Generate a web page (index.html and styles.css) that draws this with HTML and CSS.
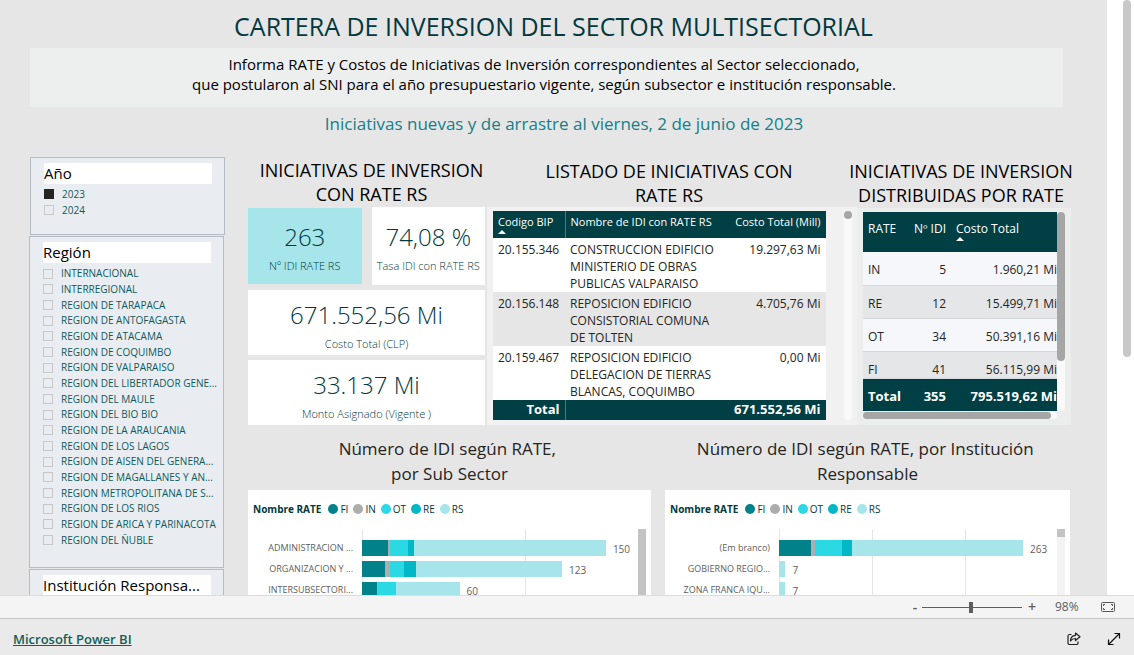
FILE: index.html
```html
<!DOCTYPE html>
<html lang="es">
<head>
<meta charset="utf-8">
<meta name="viewport" content="width=device-width, initial-scale=1">
<title>Cartera de inversión</title>
<link rel="stylesheet" href="styles.css">
</head>
<body>
<div class="app">
  <div class="viewport">
    <div class="report">
      <header class="intro">
        <h1 class="title">CARTERA DE INVERSION DEL SECTOR MULTISECTORIAL</h1>
        <p class="summary">Informa RATE y Costos de Iniciativas de Inversión correspondientes al Sector seleccionado,<br>que postularon al SNI para el año presupuestario vigente, según subsector e institución responsable.</p>
        <p class="date">Iniciativas nuevas y de arrastre al viernes, 2 de junio de 2023</p>
      </header>
      <div class="body">
        <aside class="filters">
          <section class="slicer slicer-year">
            <h2 class="slicer-title">Año</h2>
            <div class="options">
              <label class="option"><input type="checkbox" checked>2023</label>
              <label class="option"><input type="checkbox">2024</label>
            </div>
          </section>
          <section class="slicer slicer-region">
            <h2 class="slicer-title">Región</h2>
            <div class="options options-region">
              <label class="option"><input type="checkbox">INTERNACIONAL</label>
              <label class="option"><input type="checkbox">INTERREGIONAL</label>
              <label class="option"><input type="checkbox">REGION DE TARAPACA</label>
              <label class="option"><input type="checkbox">REGION DE ANTOFAGASTA</label>
              <label class="option"><input type="checkbox">REGION DE ATACAMA</label>
              <label class="option"><input type="checkbox">REGION DE COQUIMBO</label>
              <label class="option"><input type="checkbox">REGION DE VALPARAISO</label>
              <label class="option"><input type="checkbox">REGION DEL LIBERTADOR GENE...</label>
              <label class="option"><input type="checkbox">REGION DEL MAULE</label>
              <label class="option"><input type="checkbox">REGION DEL BIO BIO</label>
              <label class="option"><input type="checkbox">REGION DE LA ARAUCANIA</label>
              <label class="option"><input type="checkbox">REGION DE LOS LAGOS</label>
              <label class="option"><input type="checkbox">REGION DE AISEN DEL GENERA...</label>
              <label class="option"><input type="checkbox">REGION DE MAGALLANES Y AN...</label>
              <label class="option"><input type="checkbox">REGION METROPOLITANA DE S...</label>
              <label class="option"><input type="checkbox">REGION DE LOS RIOS</label>
              <label class="option"><input type="checkbox">REGION DE ARICA Y PARINACOTA</label>
              <label class="option"><input type="checkbox">REGION DEL ÑUBLE</label>
            </div>
          </section>
          <section class="slicer slicer-inst">
            <h2 class="slicer-title">Institución Responsa...</h2>
          </section>
        </aside>
        <main class="main">
          <div class="top">
            <section class="col-kpi">
              <h2 class="heading heading-kpi">INICIATIVAS DE INVERSION<br>CON RATE RS</h2>
              <div class="cards">
                <div class="card card-accent"><strong class="num">263</strong><span class="cap">Nº IDI RATE RS</span></div>
                <div class="card card-rate"><strong class="num">74,08 %</strong><span class="cap">Tasa IDI con RATE RS</span></div>
                <div class="card card-wide"><strong class="num">671.552,56 Mi</strong><span class="cap">Costo Total (CLP)</span></div>
                <div class="card card-wide"><strong class="num">33.137 Mi</strong><span class="cap">Monto Asignado (Vigente )</span></div>
              </div>
            </section>
            <section class="col-list">
              <h2 class="heading">LISTADO DE INICIATIVAS CON<br>RATE RS</h2>
              <div class="panel-list">
                <table class="list">
                  <colgroup><col class="c-code"><col><col class="c-cost"></colgroup>
                  <thead><tr><th>Codigo BIP<span class="sort"></span></th><th>Nombre de IDI con RATE RS</th><th class="right">Costo Total (Mill)</th></tr></thead>
                  <tbody>
                    <tr><td>20.155.346</td><td>CONSTRUCCION EDIFICIO<br>MINISTERIO DE OBRAS<br>PUBLICAS VALPARAISO</td><td class="right">19.297,63 Mi</td></tr>
                    <tr><td>20.156.148</td><td>REPOSICION EDIFICIO<br>CONSISTORIAL COMUNA<br>DE TOLTEN</td><td class="right">4.705,76 Mi</td></tr>
                    <tr><td>20.159.467</td><td>REPOSICION EDIFICIO<br>DELEGACION DE TIERRAS<br>BLANCAS, COQUIMBO</td><td class="right">0,00 Mi</td></tr>
                  </tbody>
                  <tfoot><tr><td class="right">Total</td><td></td><td class="right">671.552,56 Mi</td></tr></tfoot>
                </table>
                <div class="bar-v bar-list"><span class="thumb"></span></div>
              </div>
            </section>
            <section class="col-rate">
              <h2 class="heading heading-rate">INICIATIVAS DE INVERSION<br>DISTRIBUIDAS POR RATE</h2>
              <div class="panel-rate">
                <div class="rate-row">
                  <div class="rate-clip">
                    <table class="rate">
                      <colgroup><col class="c-rate"><col class="c-idi"><col></colgroup>
                      <thead><tr><th>RATE</th><th class="right">Nº IDI</th><th>Costo Total<span class="sort"></span></th></tr></thead>
                      <tbody>
                        <tr><td>IN</td><td class="right">5</td><td class="right">1.960,21 Mi</td></tr>
                        <tr><td>RE</td><td class="right">12</td><td class="right">15.499,71 Mi</td></tr>
                        <tr><td>OT</td><td class="right">34</td><td class="right">50.391,16 Mi</td></tr>
                        <tr class="cut"><td>FI</td><td class="right">41</td><td class="right">56.115,99 Mi</td></tr>
                      </tbody>
                      <tfoot><tr><td>Total</td><td class="right">355</td><td class="right">795.519,62 Mi</td></tr></tfoot>
                    </table>
                  </div>
                  <div class="bar-v bar-rate"><span class="thumb"></span></div>
                </div>
                <div class="bar-h"><span class="thumb"></span></div>
              </div>
            </section>
          </div>
          <div class="charts">
            <section class="chart-col">
              <h2 class="chart-heading">Número de IDI según RATE,&nbsp;<br>por Sub Sector</h2>
              <div class="chart chart-sub">
                <div class="legend"><b>Nombre RATE</b><span class="key fi">FI</span><span class="key in">IN</span><span class="key ot">OT</span><span class="key re">RE</span><span class="key rs">RS</span></div>
                <div class="plot-area">
                  <div class="cats"><span>ADMINISTRACION ...</span><span>ORGANIZACION Y ...</span><span>INTERSUBSECTORI...</span></div>
                  <div class="plot">
                    <div class="line"><i class="seg fi" style="--v:16"></i><i class="seg in" style="--v:1"></i><i class="seg ot" style="--v:11"></i><i class="seg re" style="--v:4"></i><i class="seg rs" style="--v:118"></i><span class="val">150</span></div>
                    <div class="line"><i class="seg fi" style="--v:14"></i><i class="seg in" style="--v:3"></i><i class="seg ot" style="--v:9"></i><i class="seg re" style="--v:7"></i><i class="seg rs" style="--v:90"></i><span class="val">123</span></div>
                    <div class="line"><i class="seg fi" style="--v:9"></i><i class="seg in" style="--v:1"></i><i class="seg ot" style="--v:11"></i><i class="seg rs" style="--v:39"></i><span class="val">60</span></div>
                  </div>
                  <div class="scroll"><span class="scroll-thumb"></span></div>
                </div>
              </div>
            </section>
            <section class="chart-col">
              <h2 class="chart-heading">Número de IDI según RATE, por Institución&nbsp;<br>Responsable</h2>
              <div class="chart chart-inst">
                <div class="legend"><b>Nombre RATE</b><span class="key fi">FI</span><span class="key in">IN</span><span class="key ot">OT</span><span class="key re">RE</span><span class="key rs">RS</span></div>
                <div class="plot-area">
                  <div class="cats"><span>(Em branco)</span><span>GOBIERNO REGIO...</span><span>ZONA FRANCA IQU...</span></div>
                  <div class="plot">
                    <div class="line"><i class="seg fi" style="--v:35"></i><i class="seg in" style="--v:4"></i><i class="seg ot" style="--v:29"></i><i class="seg re" style="--v:11"></i><i class="seg rs" style="--v:184"></i><span class="val">263</span></div>
                    <div class="line"><i class="seg rs" style="--v:7"></i><span class="val">7</span></div>
                    <div class="line"><i class="seg rs" style="--v:7"></i><span class="val">7</span></div>
                  </div>
                  <div class="scroll"><span class="scroll-thumb"></span></div>
                </div>
              </div>
            </section>
          </div>
        </main>
      </div>
    </div>
    <div class="gutter"><span class="page-thumb"></span></div>
  </div>
  <div class="zoombar">
    <button class="zoom-btn" type="button" aria-label="Alejar">-</button>
    <input class="zoom-range" type="range" min="0" max="100" value="49" aria-label="Zoom">
    <button class="zoom-btn zoom-in" type="button" aria-label="Acercar">+</button>
    <span class="zoom-value">98%</span>
    <button class="icon-btn" type="button" aria-label="Ajustar a la página">
      <svg width="14" height="10" viewBox="0 0 14 10" fill="none" stroke="#555"><rect x=".5" y=".5" width="13" height="9" rx="1"/><path d="M2.500 4V2.500H4M10 2.500h1.500V4M11.500 6v1.500H10M4 7.500H2.500V6"/></svg>
    </button>
  </div>
  <footer class="footer">
    <a class="brand" href="#">Microsoft Power BI</a>
    <div class="actions">
      <button class="icon-btn" type="button" aria-label="Compartir">
        <svg width="14" height="14" viewBox="0 0 14 14" fill="none" stroke="#222" stroke-width="1.200" stroke-linejoin="round"><path d="M4.500 2.500H2.500a1.500 1.500 0 0 0-1.500 1.500v7A1.500 1.500 0 0 0 2.500 12.500h7a1.500 1.500 0 0 0 1.500-1.500V9.500"/><path d="M8.500 1l4.500 3.800-4.500 3.700V6.500C6 6.500 4.500 7.500 3.500 9c0-3.500 2-5.500 5-5.700z"/></svg>
      </button>
      <button class="icon-btn" type="button" aria-label="Pantalla completa">
        <svg width="14" height="14" viewBox="0 0 14 14" fill="none" stroke="#111" stroke-width="1.200"><path d="M1.500 12.500l11-11M7.500 1.500h5v5M1.500 7.500v5h5"/></svg>
      </button>
    </div>
  </footer>
</div>
</body>
</html>
```

FILE: styles.css
```css
* { box-sizing: border-box; }

body {
  margin: 0;
  font-family: "Open Sans", "Noto Sans", sans-serif;
  color: #000;
}

h1, h2, p { margin: 0; font-weight: 400; white-space: nowrap; }
button { border: 0; padding: 0; background: none; font: inherit; color: inherit; }
table { border-collapse: collapse; table-layout: fixed; width: 100%; }
svg { display: block; }

.app { display: flex; flex-direction: column; height: 100vh; overflow: hidden; }

.viewport { flex: 1; min-height: 0; display: flex; overflow: hidden; }
.report { flex: 1; min-width: 0; display: flex; flex-direction: column; background: #e6e6e6; }
.gutter { flex: none; width: 27px; background: #fff; display: flex; justify-content: flex-end; padding-right: 3px; }
.page-thumb { width: 8px; height: 60%; background: #c8c8c8; border-radius: 4px; }

/* Heading block */
.intro { text-align: center; }
.title { font-size: 25px; line-height: 36px; padding: 8px 0 4px; color: #01393e; }
.summary {
  margin: 0 44px 0 30px; padding: 6px 5px 13px 0;
  background: #ecefee; font-size: 15px; line-height: 20px;
}
.date { padding: 5px 0 21px 21px; font-size: 17px; line-height: 24px; color: #11808a; }

.body { flex: 1 0 auto; display: flex; gap: 23px; padding: 0 36px 0 29px; }

/* Slicers */
.filters { flex: none; width: 196px; display: flex; flex-direction: column; gap: 1px; }
.slicer { background: #e9edf2; border: 1px solid #b5bcc3; padding: 5px 12px 0 13px; width: 195px; }
.slicer-year { margin-left: 1px; padding-bottom: 16px; }
.slicer-region { padding-bottom: 19px; }
.slicer-inst { flex: 1; }
.slicer-title { background: #fff; font-size: 15px; line-height: 21px; height: 21px; margin-bottom: 3px; }
.slicer-year .slicer-title { margin-bottom: 2px; }
.options { display: grid; grid-auto-rows: 16px; }
.options-region { height: 282px; grid-auto-rows: 1fr; }
.option { display: flex; align-items: center; gap: 8px; font-size: 10px; line-height: 15px; min-height: 0; color: #0b5a60; white-space: nowrap; }
.option input { appearance: none; flex: none; width: 10px; height: 10px; margin: 0; border: 1px solid #c8c8c8; }
.option input:checked { background: #252423; border-color: #252423; }

/* Upper row */
.main { flex: 1; min-width: 0; display: flex; flex-direction: column; }
.top { display: grid; grid-template-columns: 239fr 370fr 214fr; }
.heading { font-size: 18px; line-height: 24px; padding-top: 1px; text-align: center; }
.heading-kpi { padding-left: 10px; padding-bottom: 1px; margin-right: 2px; }
.heading-rate { margin: 0 -4px 0 -10px; padding: 2px 0 1px; }
.col-list .heading { padding: 2px 6px 1px 0; }

.cards { display: grid; grid-template-columns: 1fr 1fr; column-gap: 10px; row-gap: 5px; margin-right: 2px; }
.card { background: #fff; display: flex; flex-direction: column; align-items: center; justify-content: center; color: #01393e; white-space: nowrap; height: 65px; padding-top: 5px; }
.card-wide { grid-column: 1 / -1; padding-top: 8px; }
.card-accent { background: #a6e5ea; height: 76px; margin-top: 1px; }
.card-rate { height: 78px; }
.num { font-size: 24px; line-height: 34px; font-weight: 300; }
.cap { font-size: 11px; line-height: 24px; font-weight: 300; }

.panel-list { background: #f1f1f1; display: flex; gap: 18px; padding: 4px 5px 5px 6px; margin-top: -1px; }
.list { flex: 1; font-size: 12px; line-height: 17px; color: #252423; background: #fff; }
.c-code { width: 72px; }
.c-cost { width: 100px; }
th { font-weight: 400; text-align: left; color: #fff; white-space: nowrap; }
th, td { padding: 0 5px; vertical-align: top; white-space: nowrap; }
thead tr, tfoot tr { background: #004044; }
tfoot td { font-weight: 700; font-size: 13px; color: #fff; }
.right { text-align: right; }
.sort { display: block; width: 0; height: 0; border: 4px solid transparent; border-top: 0; border-bottom-color: #fff; }
.list th { font-size: 11px; padding: 2px 5px 0; height: 27px; }
.list tbody td { padding-top: 3px; height: 54px; }
.list tbody tr:nth-child(2) { background: #e6e6e6; }
.list tfoot td { height: 20px; padding-top: 1px; }
.list th:first-child, .list tfoot td:first-child { border-right: 1px solid #4d797c; }

.bar-v { flex: none; width: 8px; background: #f9f9f9; border-radius: 4px; }
.bar-v .thumb { display: block; width: 8px; background: #a6a6a6; border-radius: 4px; }
.bar-list .thumb { height: 8px; }
.bar-rate .thumb { height: 75%; }
.bar-h { background: #f9f9f9; border-radius: 4px; height: 7px; margin: 1px 8px 0 0; }
.bar-h .thumb { display: block; width: 97%; height: 7px; background: #a6a6a6; border-radius: 4px; }

.panel-rate { background: #eceeed; padding: 4px 6px 6px; }
.rate-row { display: flex; }
.rate-clip { flex: 1; min-width: 0; overflow: hidden; }
.rate { font-size: 12px; line-height: 16px; color: #252423; }
.c-rate { width: 38px; }
.c-idi { width: 50px; }
.rate th { height: 40px; padding-top: 9px; }
.rate td { height: 33px; padding-top: 10px; }
.rate tbody tr { background: #f5f7fa; border-bottom: 1px solid #d5d8da; }
.rate tbody tr:nth-child(even) { background: #e5e6e7; }
.rate .cut td { height: 27px; }
.rate tfoot td { padding-top: 9px; }
.rate td:last-child { padding-right: 0; }

/* Charts */
.charts { flex: 1; display: grid; grid-template-columns: 403fr 405fr; column-gap: 14px; padding-right: 1px; }
.chart-col { display: flex; flex-direction: column; }
.chart-heading { font-size: 17px; line-height: 25px; padding: 11px 0 4px; text-align: center; color: #252423; }
.chart { flex: 1 0 105px; background: #fff; display: flex; flex-direction: column; padding: 9px 5px 0; }
.legend { display: flex; align-items: center; gap: 5px; font-size: 10px; line-height: 20px; color: #01393e; }
.legend b { margin-right: 2px; }
.key { display: flex; align-items: center; gap: 2px; }
.key::before { content: ""; width: 10px; height: 10px; border-radius: 50%; background: var(--c); }
.fi { --c: #01818a; }
.in { --c: #adadad; }
.ot { --c: #2bd9e5; }
.re { --c: #01b8c6; }
.rs { --c: #a6e5ea; }
.plot-area { flex: 1; display: flex; margin-top: 10px; }
.cats { width: 100px; display: flex; flex-direction: column; gap: 5px; padding-top: 11px; align-items: flex-end; font-size: 9px; line-height: 16px; color: #605e5c; white-space: nowrap; }
.plot {
  flex: 1; margin: 0 5px 0 9px; padding-top: 11px;
  display: flex; flex-direction: column; gap: 5px;
  background: repeating-linear-gradient(to right, #e6e6e6 0 1px, transparent 1px var(--step));
}
.line { display: flex; align-items: center; height: 16px; }
.seg { flex: none; height: 16px; width: calc(var(--v) * var(--unit)); background: var(--c); }
.val { margin-left: 7px; font-size: 10px; line-height: 16px; padding-top: 1px; color: #605e5c; }
.chart-sub { --unit: 0.6%; --step: 60%; }
.chart-inst { --unit: 0.34%; --step: 34%; }
.scroll { flex: none; width: 8px; background: #f3f3f3; display: flex; }
.scroll-thumb { flex: 1; background: #c3c3c3; }
.chart-inst .scroll-thumb { height: 8px; }

/* Bottom bars */
.zoombar { flex: none; height: 23px; border-top: 1px solid #dcdcdc; background: #f4f4f4; display: flex; align-items: center; justify-content: flex-end; padding-right: 19px; color: #605e5c; }
.zoom-btn { width: 10px; font-size: 14px; line-height: 20px; font-weight: 600; }
.zoom-in { margin-left: 5px; }
.zoom-range { appearance: none; width: 100px; height: 12px; margin: 0 0 0 2px; background: linear-gradient(#605e5c, #605e5c) center / 100% 1px no-repeat; }
.zoom-range::-webkit-slider-thumb { appearance: none; width: 4px; height: 11px; background: #605e5c; }
.zoom-value { width: 24px; margin: 0 22px 0 18px; font-size: 12px; line-height: 20px; }
.footer { flex: none; height: 37px; border-top: 1px solid #c6c6c6; background: #eaeaea; display: flex; align-items: center; justify-content: space-between; padding: 4px 13px 0; }
.brand { font-size: 13px; font-weight: 600; line-height: 18px; color: #0f6159; text-decoration: underline; }
.actions { display: flex; gap: 26px; }
```
